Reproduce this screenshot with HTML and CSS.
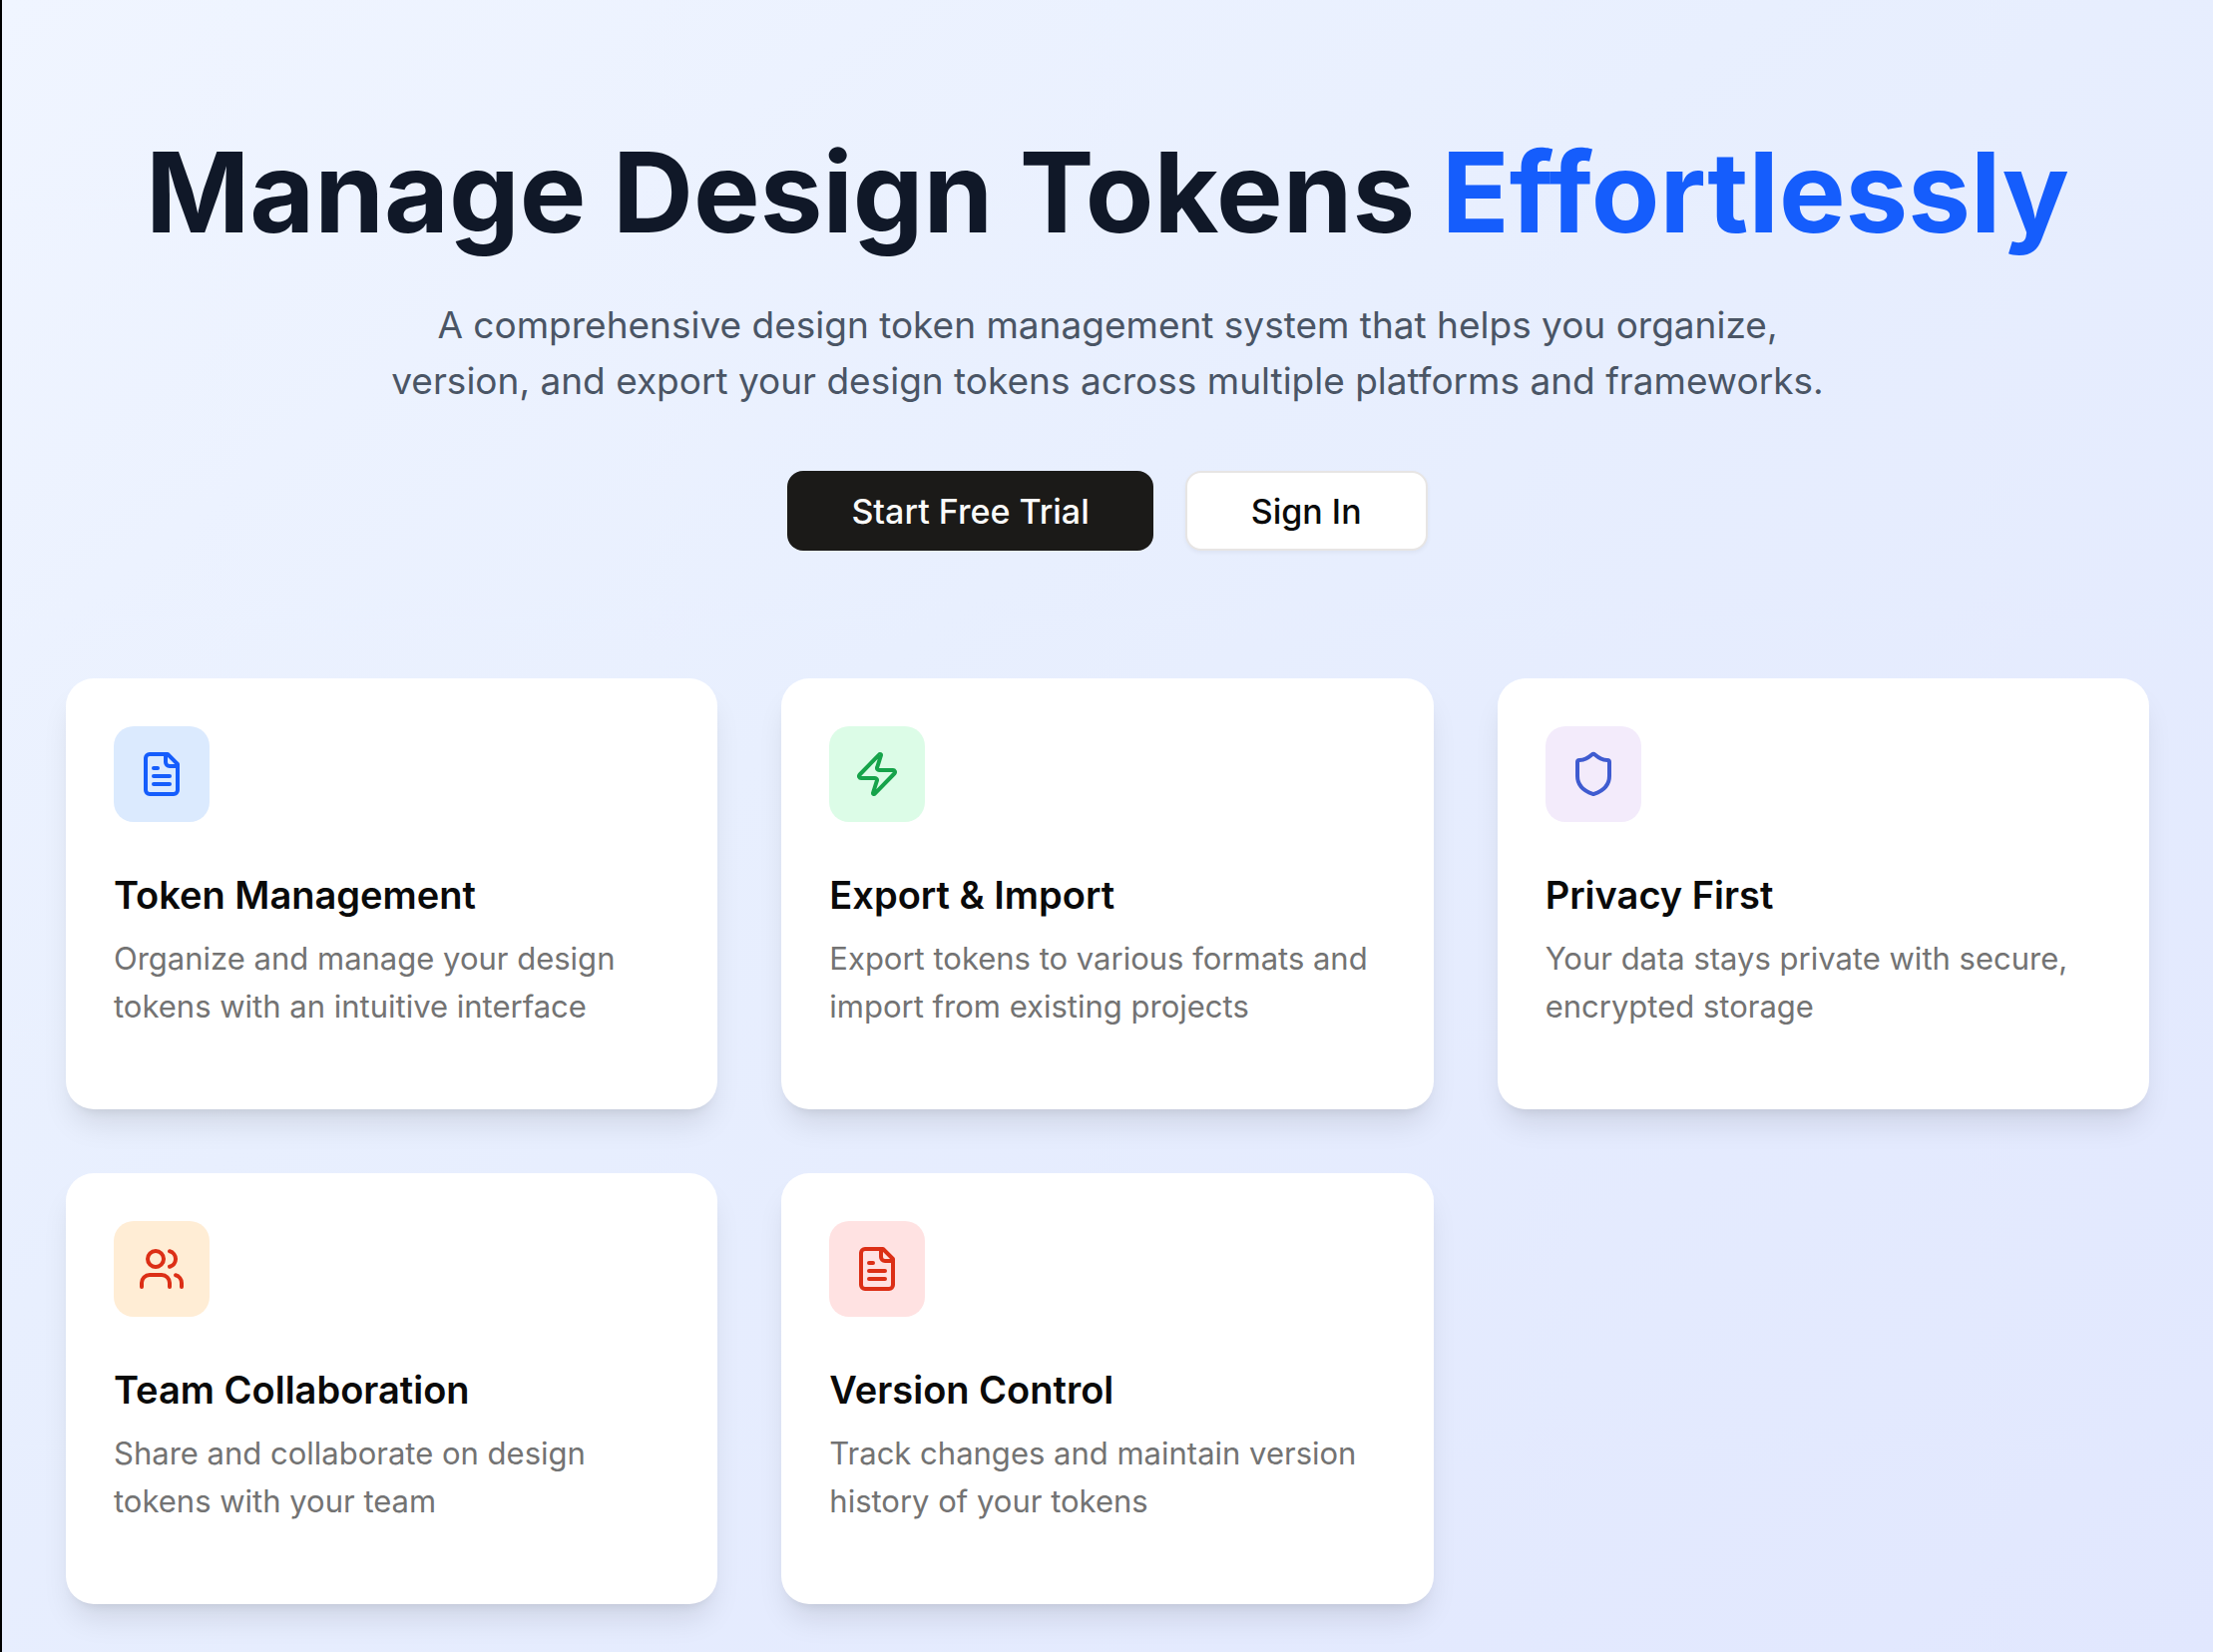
FILE: index.html
```
<!DOCTYPE html>
<html lang="en">
<head>
    <meta charset="UTF-8">
    <meta name="viewport" content="width=device-width, initial-scale=1.0">
    <title>Manage Design Tokens Effortlessly</title>
    <link rel="stylesheet" href="styles.css">
</head>
<body>
    <main class="page">
        <section class="hero">
            <h1>Manage Design Tokens <span class="highlight">Effortlessly</span></h1>
            <p class="hero-text">A comprehensive design token management system that helps you organize, version, and export your design tokens across multiple platforms and frameworks.</p>
            <div class="hero-actions">
                <button type="button" class="btn btn-primary">Start Free Trial</button>
                <button type="button" class="btn btn-outline">Sign In</button>
            </div>
        </section>

        <section class="features">
            <article class="card">
                <div class="card-icon blue">
                    <svg viewBox="0 0 24 24" aria-hidden="true">
                        <path d="M15 2H6a2 2 0 0 0-2 2v16a2 2 0 0 0 2 2h12a2 2 0 0 0 2-2V7Z"/>
                        <path d="M14 2v4a2 2 0 0 0 2 2h4"/>
                        <path d="M10 9H8"/>
                        <path d="M16 13H8"/>
                        <path d="M16 17H8"/>
                    </svg>
                </div>
                <h2>Token Management</h2>
                <p>Organize and manage your design tokens with an intuitive interface</p>
            </article>
            <article class="card">
                <div class="card-icon green">
                    <svg viewBox="0 0 24 24" aria-hidden="true">
                        <path d="M4 14a1 1 0 0 1-.78-1.63l9.9-10.2a.5.5 0 0 1 .86.46l-1.92 6.02A1 1 0 0 0 13 10h7a1 1 0 0 1 .78 1.63l-9.9 10.2a.5.5 0 0 1-.86-.46l1.92-6.02A1 1 0 0 0 11 14z"/>
                    </svg>
                </div>
                <h2>Export &amp; Import</h2>
                <p>Export tokens to various formats and import from existing projects</p>
            </article>
            <article class="card">
                <div class="card-icon purple">
                    <svg viewBox="0 0 24 24" aria-hidden="true">
                        <path d="M20 13c0 5-3.5 7.5-7.66 8.95a1 1 0 0 1-.67-.01C7.5 20.5 4 18 4 13V6a1 1 0 0 1 1-1c2 0 4.5-1.2 6.24-2.72a1.17 1.17 0 0 1 1.52 0C14.51 3.81 17 5 19 5a1 1 0 0 1 1 1z"/>
                    </svg>
                </div>
                <h2>Privacy First</h2>
                <p>Your data stays private with secure, encrypted storage</p>
            </article>
            <article class="card">
                <div class="card-icon orange">
                    <svg viewBox="0 0 24 24" aria-hidden="true">
                        <path d="M16 21v-2a4 4 0 0 0-4-4H6a4 4 0 0 0-4 4v2"/>
                        <circle cx="9" cy="7" r="4"/>
                        <path d="M16 3.13a4 4 0 0 1 0 7.75"/>
                        <path d="M22 21v-2a4 4 0 0 0-3-3.87"/>
                    </svg>
                </div>
                <h2>Team Collaboration</h2>
                <p>Share and collaborate on design tokens with your team</p>
            </article>
            <article class="card">
                <div class="card-icon red">
                    <svg viewBox="0 0 24 24" aria-hidden="true">
                        <path d="M15 2H6a2 2 0 0 0-2 2v16a2 2 0 0 0 2 2h12a2 2 0 0 0 2-2V7Z"/>
                        <path d="M14 2v4a2 2 0 0 0 2 2h4"/>
                        <path d="M10 9H8"/>
                        <path d="M16 13H8"/>
                        <path d="M16 17H8"/>
                    </svg>
                </div>
                <h2>Version Control</h2>
                <p>Track changes and maintain version history of your tokens</p>
            </article>
        </section>
    </main>
</body>
</html>
```
FILE: styles.css
```
* {
    box-sizing: border-box;
}
body {
    margin: 0;
    font-family: Inter, "Liberation Sans", sans-serif;
    color: #0a0a0a;
}
h1, h2, p {
    margin: 0;
}
.page {
    min-height: 100vh;
    padding: 132px 64px 48px;
    border-left: 2px solid black;
    background: linear-gradient(to bottom right, #f0f5ff, #e8effe 40%, #e1e7fe);
}
.hero {
    display: flex;
    flex-direction: column;
    align-items: center;
    margin-bottom: 128px;
    text-align: center;
}
.hero h1 {
    margin-bottom: 46px;
    font-size: 112px;
    font-weight: 700;
    line-height: 120px;
    color: #101828;
}
.hero .highlight {
    color: #155dfc;
}
.hero-text {
    max-width: 1456px;
    margin-bottom: 62px;
    font-size: 37px;
    line-height: 56px;
    color: #4a5565;
}
.hero-actions {
    display: flex;
    gap: 32px;
}
.btn {
    height: 80px;
    padding: 0 64px;
    border: none;
    border-radius: 16px;
    font-family: inherit;
    font-size: 34px;
    font-weight: 500;
    cursor: pointer;
}
.btn-primary {
    background-color: #1b1a18;
    color: #fafaf9;
}
.btn-outline {
    border: 2px solid #e7e5e4;
    background-color: white;
    color: #0a0a0a;
    box-shadow: 0 2px 4px rgba(0, 0, 0, 0.05);
}
.features {
    display: grid;
    grid-template-columns: repeat(3, 1fr);
    gap: 64px;
}
.card {
    padding: 48px 48px 79px;
    border-radius: 28px;
    background-color: white;
    box-shadow: 0 20px 30px -6px rgba(0, 0, 0, 0.1), 0 8px 12px -8px rgba(0, 0, 0, 0.1);
}
.card-icon {
    display: flex;
    justify-content: center;
    align-items: center;
    width: 96px;
    height: 96px;
    margin-bottom: 45px;
    border-radius: 20px;
}
.card-icon svg {
    width: 48px;
    height: 48px;
    fill: none;
    stroke: currentColor;
    stroke-width: 2;
    stroke-linecap: round;
    stroke-linejoin: round;
}
.blue {
    background-color: #dbeafe;
    color: #155dfc;
}
.green {
    background-color: #dcfce7;
    color: #16a34a;
}
.purple {
    background-color: #f3ebfb;
    color: #3f5bd0;
}
.orange {
    background-color: #ffedd5;
    color: #dc2f16;
}
.red {
    background-color: #ffe2e2;
    color: #dc2f16;
}
.card h2 {
    margin-bottom: 12px;
    font-size: 38px;
    font-weight: 600;
    line-height: 56px;
}
.card p {
    font-size: 31px;
    line-height: 48px;
    color: #737373;
}
```
